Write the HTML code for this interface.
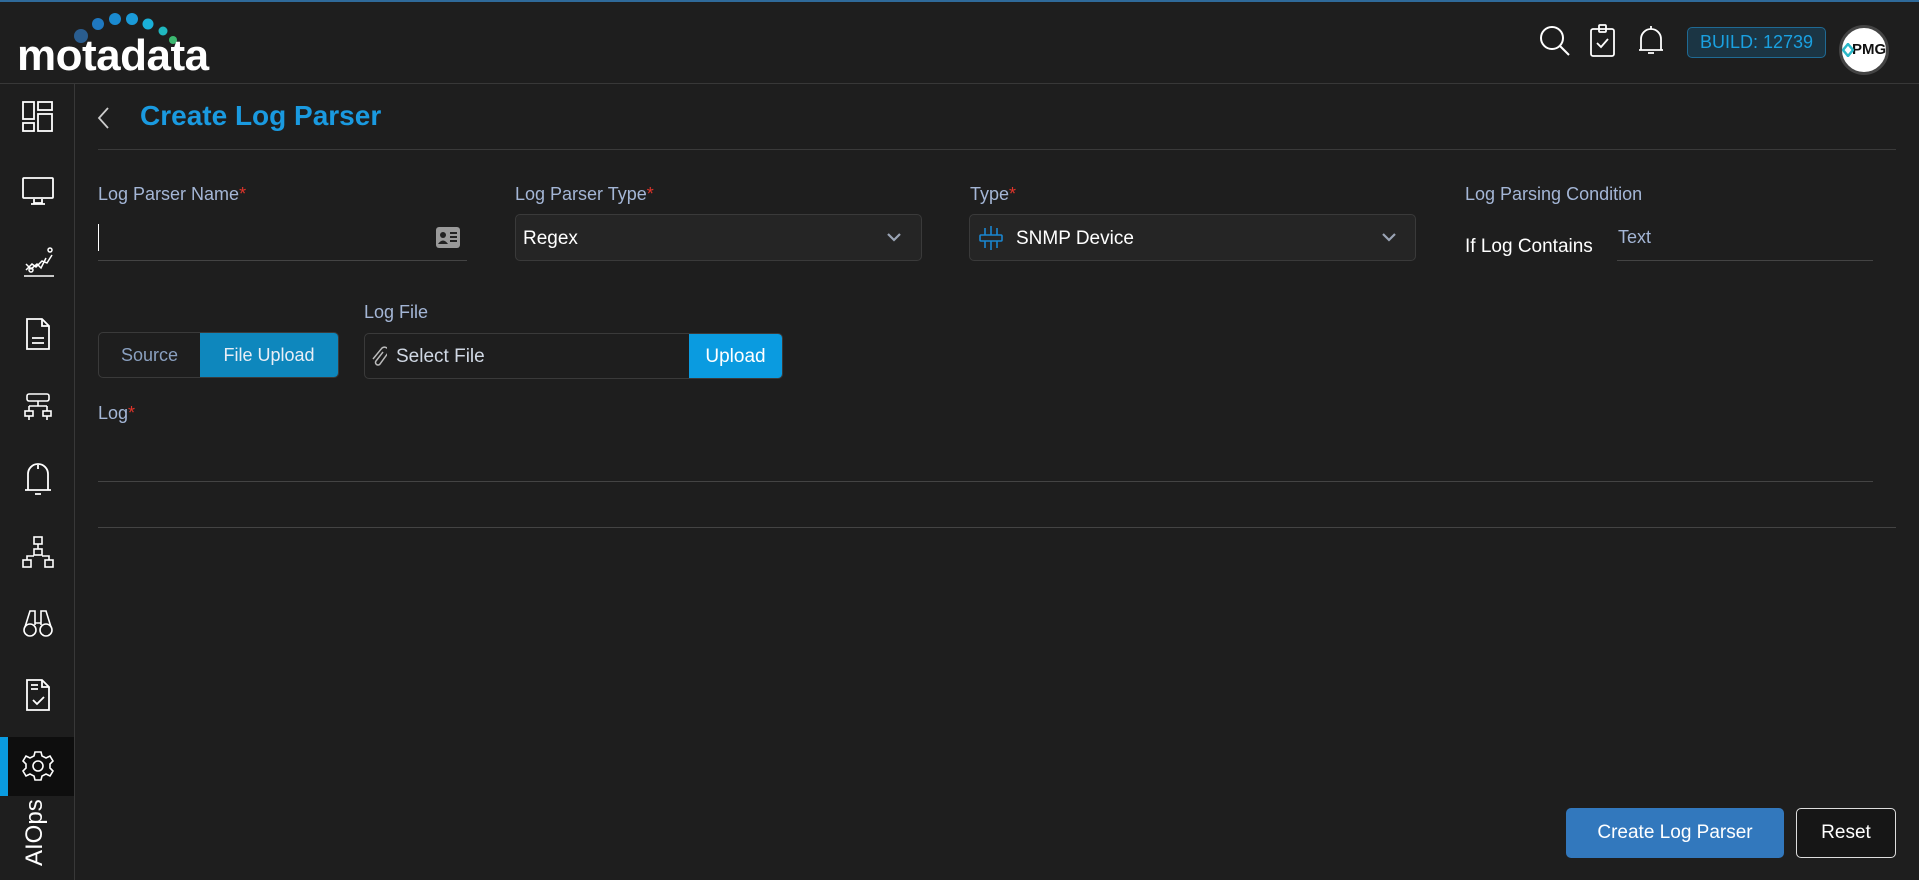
<!DOCTYPE html>
<html><head><meta charset="utf-8"><style>
*{box-sizing:border-box;margin:0;padding:0}
body{width:1919px;height:880px;background:#1e1e1e;font-family:"Liberation Sans",sans-serif;position:relative;overflow:hidden;color:#fff}
.a{position:absolute}
.lbl{color:#a4b6d6;font-size:18px}
.req{color:#e0342a}
.ic{position:absolute;left:22px;width:32px;height:32px}
</style></head><body>
<div class="a" style="left:0;top:0;width:1919px;height:2px;background:#2f6a9a"></div>
<div class="a" style="left:0;top:83px;width:1919px;height:1px;background:#383838"></div>
<div class="a" style="left:74px;top:83px;width:1px;height:797px;background:#383838"></div>

<!-- logo -->
<svg class="a" style="left:15px;top:10px" width="210" height="64">
<circle cx="66" cy="26" r="7" fill="#2a5d8f"/><circle cx="83" cy="14" r="6" fill="#1f78c0"/><circle cx="100" cy="9" r="6" fill="#1a8ad0"/><circle cx="117" cy="9" r="6" fill="#1a9ad8"/><circle cx="133" cy="14" r="5.5" fill="#1ab0d8"/><circle cx="148" cy="21" r="4.5" fill="#20b8c0"/><circle cx="158" cy="30" r="4" fill="#3cb870"/>
<text x="2" y="60" font-family="Liberation Sans" font-weight="bold" font-size="44" fill="#fff" letter-spacing="-0.5">motadata</text>
</svg>

<!-- header icons -->
<svg class="a" style="left:1538px;top:24px" width="34" height="34" fill="none" stroke="#fff" stroke-width="2"><circle cx="14" cy="14" r="11"/><path d="M22 22l9 9"/></svg>
<svg class="a" style="left:1589px;top:24px" width="28" height="34" fill="none" stroke="#fff" stroke-width="1.8"><rect x="2" y="5" width="23" height="27" rx="2"/><rect x="10" y="1" width="7" height="7" rx="1"/><path d="M8 19l4 4 7-8"/></svg>
<svg class="a" style="left:1636px;top:24px" width="30" height="34" fill="none" stroke="#fff" stroke-width="1.8"><path d="M5 26V15a10 10 0 0120 0v11H3h24"/><path d="M15 2v3M12 29h6"/></svg>
<div class="a" style="left:1687px;top:27px;width:139px;height:31px;border:1px solid #1f6a94;background:#1b3544;border-radius:5px;color:#1aa0e0;font-size:18px;text-align:center;line-height:29px">BUILD: 12739</div>
<div class="a" style="left:1839px;top:25px;width:50px;height:50px;border-radius:50%;background:#fff;border:3px solid #444;overflow:hidden;color:#111;font-weight:bold;font-size:15px;line-height:44px;padding-left:10px">PMG</div>
<svg class="a" style="left:1842px;top:43px" width="12" height="14"><path d="M6 1l5 6-5 6-5-6z" fill="none" stroke="#2ab8c8" stroke-width="2.5"/></svg>

<!-- sidebar icons -->
<svg class="ic" style="top:101px" fill="none" stroke="#fff" stroke-width="1.8"><rect x="1" y="1" width="11" height="17"/><rect x="16" y="1" width="14" height="8"/><rect x="1" y="22" width="11" height="8"/><rect x="16" y="13" width="14" height="17"/></svg>
<svg class="ic" style="top:175px" fill="none" stroke="#fff" stroke-width="1.8"><rect x="1" y="3" width="30" height="20" rx="1"/><path d="M12 24v4h8v-4M9 29h14"/></svg>
<svg class="ic" style="top:246px" fill="none" stroke="#fff" stroke-width="1.5"><path d="M2 30h30"/><path d="M4 24l6-6 4 3 6-6 5 2 5-8M4 18l5 5 6-5 4 4 5-10"/><circle cx="28" cy="4" r="2"/><circle cx="9" cy="24" r="2"/></svg>
<svg class="ic" style="top:318px" fill="none" stroke="#fff" stroke-width="1.8"><path d="M5 1h15l7 7v23H5z"/><path d="M20 1v7h7M10 20h12M10 25h12"/></svg>
<svg class="ic" style="top:392px" fill="none" stroke="#fff" stroke-width="1.6"><rect x="5" y="2" width="22" height="7" rx="2"/><path d="M16 9v5M7 14h18M7 14v5M25 14v5"/><rect x="3" y="19" width="8" height="5"/><rect x="21" y="19" width="8" height="5"/><path d="M7 24v4M25 24v4"/></svg>
<svg class="ic" style="top:463px" fill="none" stroke="#fff" stroke-width="1.8"><path d="M16 2v4M6 27V11a10 10 0 0120 0v16H3h26M13 31h6"/></svg>
<svg class="ic" style="top:536px" fill="none" stroke="#fff" stroke-width="1.6"><rect x="12" y="1" width="8" height="7"/><rect x="12" y="13" width="8" height="6"/><rect x="1" y="24" width="8" height="7"/><rect x="23" y="24" width="8" height="7"/><path d="M16 8v5M5 24v-4h7M27 24v-4h-7"/></svg>
<svg class="ic" style="top:607px" fill="none" stroke="#fff" stroke-width="1.6"><circle cx="8" cy="23" r="6"/><circle cx="24" cy="23" r="6"/><path d="M3 20l5-16h5v14M29 20l-5-16h-5v14M13 16h6"/></svg>
<svg class="ic" style="top:679px" fill="none" stroke="#fff" stroke-width="1.8"><path d="M5 1h15l7 7v23H5z"/><path d="M20 1v7h7M9 6h7M9 10h7M11 21l4 4 7-7"/></svg>
<div class="a" style="left:0;top:737px;width:74px;height:59px;background:#0e0e0e"></div>
<div class="a" style="left:0;top:737px;width:8px;height:59px;background:#0a9be0"></div>
<svg class="ic" style="top:750px" fill="none" stroke="#fff" stroke-width="1.6"><path d="M13 2h6l1 4 4 2 4-2 3 5-3 3v4l3 3-3 5-4-2-4 2-1 4h-6l-1-4-4-2-4 2-3-5 3-3v-4L1 11l3-5 4 2 4-2z"/><circle cx="16" cy="16" r="5"/></svg>
<div class="a" style="left:21px;top:866px;transform:rotate(-90deg);transform-origin:0 0;font-size:24px;color:#fff;width:80px">AIOps</div>

<!-- title -->
<svg class="a" style="left:96px;top:106px" width="16" height="24" fill="none" stroke="#ccc" stroke-width="1.8"><path d="M12 2L3 12l9 10"/></svg>
<div class="a" style="left:140px;top:100px;font-size:28px;color:#1a9ae0;font-weight:bold">Create Log Parser</div>
<div class="a" style="left:98px;top:149px;width:1798px;height:1px;background:#3a3a3a"></div>

<!-- row 1 -->
<div class="a lbl" style="left:98px;top:184px">Log Parser Name<span class="req">*</span></div>
<div class="a" style="left:98px;top:224px;width:1px;height:27px;background:#fff"></div>
<svg class="a" style="left:436px;top:227px" width="24" height="21"><rect x="0" y="0" width="24" height="21" rx="3" fill="#9a9a9a"/><circle cx="7" cy="8" r="3" fill="#222"/><path d="M2 17q5-7 10 0z" fill="#222"/><path d="M14 6h7M14 10h7M14 14h7" stroke="#222" stroke-width="2"/></svg>
<div class="a" style="left:98px;top:260px;width:369px;height:1px;background:#444"></div>

<div class="a lbl" style="left:515px;top:184px">Log Parser Type<span class="req">*</span></div>
<div class="a" style="left:515px;top:214px;width:407px;height:47px;background:#252525;border:1px solid #3a3a3a;border-radius:5px"></div>
<div class="a" style="left:523px;top:228px;font-size:19px;color:#fff">Regex</div>
<svg class="a" style="left:886px;top:232px" width="16" height="12" fill="none" stroke="#9aa4b4" stroke-width="2.2"><path d="M2 2l6 6 6-6"/></svg>

<div class="a lbl" style="left:970px;top:184px">Type<span class="req">*</span></div>
<div class="a" style="left:969px;top:214px;width:447px;height:47px;background:#252525;border:1px solid #3a3a3a;border-radius:5px"></div>
<svg class="a" style="left:978px;top:224px" width="26" height="28" fill="none" stroke="#1a86d0" stroke-width="1.6"><rect x="2" y="11" width="22" height="6" rx="1"/><path d="M7 11V4M13 11V2M19 11V4M7 17v7M13 17v9M19 17v7"/></svg>
<div class="a" style="left:1016px;top:228px;font-size:19px;color:#fff">SNMP Device</div>
<svg class="a" style="left:1381px;top:232px" width="16" height="12" fill="none" stroke="#9aa4b4" stroke-width="2.2"><path d="M2 2l6 6 6-6"/></svg>

<div class="a lbl" style="left:1465px;top:184px">Log Parsing Condition</div>
<div class="a" style="left:1465px;top:236px;font-size:19px;color:#fff">If Log Contains</div>
<div class="a" style="left:1618px;top:227px;font-size:18px;color:#a4b6d6">Text</div>
<div class="a" style="left:1617px;top:260px;width:256px;height:1px;background:#444"></div>

<!-- row 2 -->
<div class="a" style="left:98px;top:332px;width:241px;height:46px;border:1px solid #3a3a3a;border-radius:5px;overflow:hidden;display:flex;font-size:18px">
<div style="width:101px;color:#8aa0c0;text-align:center;line-height:44px">Source</div>
<div style="flex:1;background:#0e87bd;color:#e8eef6;text-align:center;line-height:44px">File Upload</div></div>
<div class="a lbl" style="left:364px;top:302px">Log File</div>
<div class="a" style="left:364px;top:333px;width:419px;height:46px;border:1px solid #3a3a3a;border-radius:5px;overflow:hidden"></div>
<svg class="a" style="left:371px;top:345px" width="16" height="22" fill="none" stroke="#bbb" stroke-width="1.5"><path d="M12 7l-7 9a2.5 2.5 0 004 3l8-11a4 4 0 00-6-5L2 14"/></svg>
<div class="a" style="left:396px;top:346px;font-size:19px;color:#d0d8e4">Select File</div>
<div class="a" style="left:689px;top:334px;width:93px;height:44px;background:#0a9be0;border-radius:0 4px 4px 0;color:#fff;font-size:19px;text-align:center;line-height:46px">Upload</div>

<div class="a lbl" style="left:98px;top:403px">Log<span class="req">*</span></div>
<div class="a" style="left:98px;top:481px;width:1775px;height:1px;background:#444"></div>
<div class="a" style="left:98px;top:527px;width:1798px;height:1px;background:#444"></div>

<!-- buttons -->
<div class="a" style="left:1566px;top:808px;width:218px;height:50px;background:#3278bd;border-radius:5px;color:#fff;font-size:19px;text-align:center;line-height:50px">Create Log Parser</div>
<div class="a" style="left:1796px;top:808px;width:100px;height:50px;border:1.5px solid #ddd;border-radius:5px;background:#161616;color:#fff;font-size:19px;text-align:center;line-height:47px">Reset</div>
</body></html>
